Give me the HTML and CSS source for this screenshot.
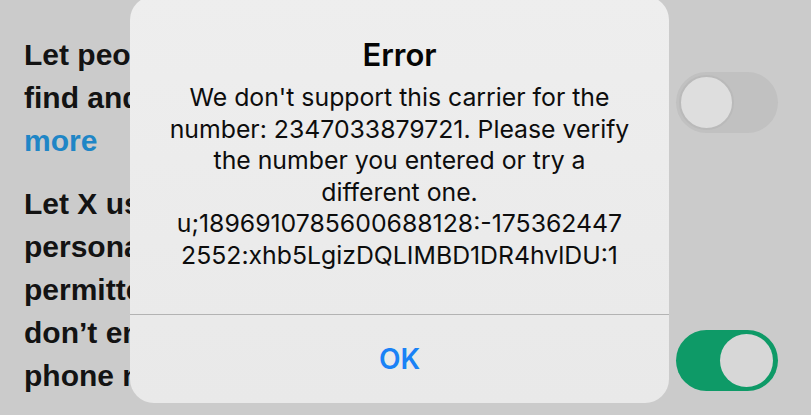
FILE: index.html
```html
<!DOCTYPE html>
<html lang="en">
<head>
  <meta charset="UTF-8" />
  <title>Discoverability - X</title>
  <meta name="viewport" content="width=device-width, initial-scale=1.0"/>
  <link rel="stylesheet" href="styles.css">
</head>
<body>

  <main class="settings">
    <div class="setting-row">
      <p class="setting-text">Let people who have your phone<br>find and connect with you on X. Learn<br><a href="#">more</a></p>
      <span class="toggle toggle-first"><span class="knob"></span></span>
    </div>
    <div class="setting-row">
      <p class="setting-text">Let X use your phone number to<br>personalize ads and other content, if<br>permitted. If you<br>don’t enter a phone number, your<br>phone number stays private</p>
      <span class="toggle toggle-on toggle-second"><span class="knob"></span></span>
    </div>
  </main>

  <div class="alert-layer">
    <div class="alert">
      <div class="alert-body">
        <h2 class="alert-title">Error</h2>
        <p class="alert-message">We don't support this carrier for the<br>number: 2347033879721. Please verify<br>the number you entered or try a<br>different one.<br>u;1896910785600688128:-175362447<br>2552:xhb5LgizDQLIMBD1DR4hvlDU:1</p>
      </div>
      <button class="alert-button">OK</button>
    </div>
  </div>

</body>
</html>
```

FILE: styles.css
```css
html, body {
  height: 415px;
  overflow: hidden;
}

body {
  margin: 0;
  padding: 0;
  background: #cbcbcb;
  font-family: 'Liberation Sans', Arial, sans-serif;
}

/* Lista de ajustes detras de la alerta */
.settings {
  padding: 33px 33px 0 24px;
  display: flex;
  flex-direction: column;
  gap: 20px;
}

.setting-row {
  display: flex;
  justify-content: space-between;
  align-items: flex-start;
}

.setting-text {
  margin: 0;
  font-size: 30px;
  font-weight: bold;
  line-height: 43px;
  color: #131313;
  white-space: nowrap;
}

.setting-text a {
  color: #1f86c6;
  text-decoration: none;
}

.toggle {
  width: 102px;
  height: 61px;
  border-radius: 31px;
  background: #c1c1c1;
  box-sizing: border-box;
  padding: 3px;
  display: flex;
  flex-shrink: 0;
}

.toggle .knob {
  width: 55px;
  height: 55px;
  border-radius: 50%;
  background: #dedede;
  box-sizing: border-box;
  border: 2px solid #bababa;
}

.toggle-first {
  margin-top: 39px;
}

.toggle-second {
  margin-top: 148px;
}

.toggle-on {
  background: #0e9a67;
  justify-content: flex-end;
  padding: 4px 5px;
}

.toggle-on .knob {
  width: 53px;
  height: 53px;
  border: none;
  background: #d7d7d7;
}

/* Alerta tipo iOS */
.alert-layer {
  position: absolute;
  top: -4px;
  left: 130px;
}

.alert {
  width: 539px;
  height: 407px;
  background: linear-gradient(#eeeeee, #e9e9e9);
  border-radius: 24px;
  display: flex;
  flex-direction: column;
  font-family: Inter, 'Noto Sans', sans-serif;
  overflow: hidden;
}

.alert-body {
  flex: 1;
  padding-top: 40px;
  text-align: center;
  border-bottom: 1px solid #b3b3b3;
}

.alert-title {
  margin: 0;
  font-size: 31px;
  font-weight: 600;
  line-height: 38px;
  color: #050505;
}

.alert-message {
  margin: 8px 0 0;
  font-size: 24.8px;
  line-height: 31.5px;
  color: #0d0d0d;
  white-space: nowrap;
}

.alert-button {
  height: 88px;
  border: none;
  background: none;
  font-family: Inter, 'Noto Sans', sans-serif;
  font-size: 28px;
  font-weight: 600;
  color: #1a82f6;
  padding: 0;
  cursor: pointer;
}
```
